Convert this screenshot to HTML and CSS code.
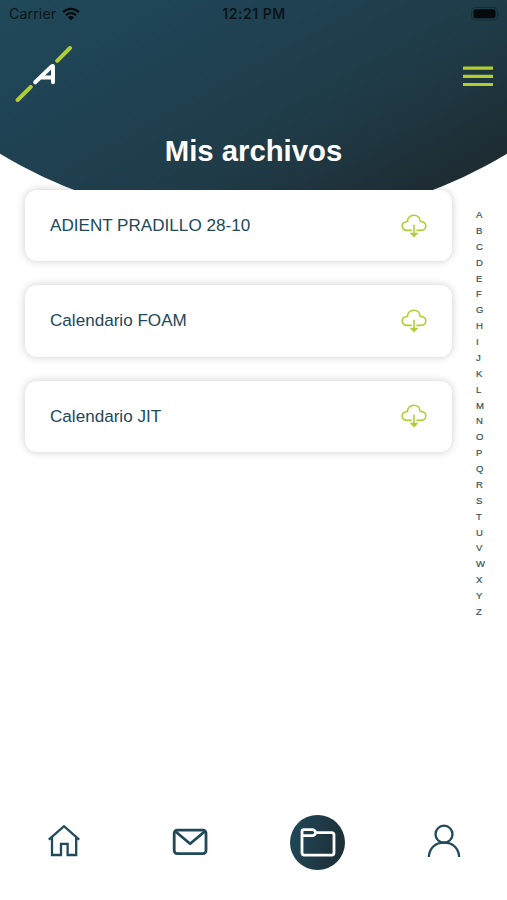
FILE: index.html
```
<!DOCTYPE html>
<html lang="es">

<head>
    <meta charset="utf-8">
    <meta name="viewport" content="width=device-width, initial-scale=1">
    <title>Mis archivos</title>
    <link rel="stylesheet" href="styles.css">
</head>

<body>

    <svg class="defs" width="0" height="0">
        <symbol id="cloud" viewBox="0 0 26 24">
            <path d="M10.8 16.4H6C3.2 16.4 1.2 14.4 1.2 11.9C1.2 9.5 3.2 7.6 6.5 7.5C6.4 3.8 9.2 1.2 12.8 1.2C16.4 1.2 19 3.6 19.2 7.3C22.8 7.6 24.8 9.4 24.8 12C24.8 14.5 22.8 16.4 20 16.4H15.4M13 10.8V21"/>
            <path class="head" d="M10.3 19.5L13 22.4L15.7 19.5Z"/>
        </symbol>
    </svg>

    <header class="header">
        <div class="status">
            <div class="carrier">
                <span>Carrier</span>
                <svg width="18" height="14" viewBox="0 0 18 14">
                    <path class="wave" d="M1.1 5.1C5.5 0.7 12.5 0.7 16.9 5.1M4 8.2C6.8 5.5 11.2 5.5 14 8.2"/>
                    <path d="M9 13.3L5.9 10.2C7.6 8.7 10.4 8.7 12.1 10.2Z"/>
                </svg>
            </div>
            <span class="time">12:21 PM</span>
            <svg class="battery" width="28" height="14" viewBox="0 0 28 14">
                <rect class="shell" x="0.5" y="0.5" width="26" height="12.5" rx="3.5"/>
                <rect x="2.5" y="2.3" width="22" height="9" rx="2"/>
                <path class="tip" d="M27 4.7C28.4 5.3 28.4 8.3 27 8.9Z"/>
            </svg>
        </div>

        <div class="top">
            <svg class="logo" width="58" height="58" viewBox="0 0 58 58">
                <path class="slash" d="M2.6 55L15.8 41.8M42.2 15.8L55 3"/>
                <path class="letter" d="M20.2 37.3L36.6 21.4Q38 20.2 38 22V37.3M26 32.6H38"/>
            </svg>
            <svg class="menu" width="30" height="21" viewBox="0 0 30 21">
                <path d="M0 2.1H30M0 10.3H30M0 18.5H30"/>
            </svg>
        </div>

        <h1>Mis archivos</h1>
    </header>

    <main>
        <ul class="files">
            <li>
                <span>ADIENT PRADILLO 28-10</span>
                <svg width="26" height="24"><use href="#cloud"/></svg>
            </li>
            <li>
                <span>Calendario FOAM</span>
                <svg width="26" height="24"><use href="#cloud"/></svg>
            </li>
            <li>
                <span>Calendario JIT</span>
                <svg width="26" height="24"><use href="#cloud"/></svg>
            </li>
        </ul>

        <ul class="index">
            <li>A</li>
            <li>B</li>
            <li>C</li>
            <li>D</li>
            <li>E</li>
            <li>F</li>
            <li>G</li>
            <li>H</li>
            <li>I</li>
            <li>J</li>
            <li>K</li>
            <li>L</li>
            <li>M</li>
            <li>N</li>
            <li>O</li>
            <li>P</li>
            <li>Q</li>
            <li>R</li>
            <li>S</li>
            <li>T</li>
            <li>U</li>
            <li>V</li>
            <li>W</li>
            <li>X</li>
            <li>Y</li>
            <li>Z</li>
        </ul>
    </main>

    <nav class="tabs">
        <a>
            <svg width="34" height="34" viewBox="0 0 34 34">
                <path class="thin" d="M1.8 15.6L17 2.2L32.2 15.6M5 13V31H14V19.8H20.6V31H29.2V13"/>
            </svg>
        </a>
        <a>
            <svg width="36" height="28" viewBox="0 0 36 28">
                <rect x="2.2" y="2.2" width="31.8" height="23.4" rx="3"/>
                <path d="M3.2 3.3L18.1 15.8L33 3.3"/>
            </svg>
        </a>
        <a class="active">
            <svg width="36" height="29" viewBox="0 0 36 29">
                <path d="M2 7.6V3.6Q2 1.6 4 1.6H12.6Q13.8 1.6 14.6 2.6L16 4.6H31.6Q34 4.6 34 7V24.8Q34 27.2 31.6 27.2H4.4Q2 27.2 2 24.8ZM2 7.6H12.6Q13.8 7.6 14.6 6.6L16 4.6"/>
            </svg>
        </a>
        <a>
            <svg width="34" height="34" viewBox="0 0 34 34">
                <circle class="thin" cx="17" cy="10.2" r="8.5"/>
                <path class="thin" d="M1.8 33C2.4 24 8.2 18.7 17 18.7C25.8 18.7 31.6 24 32.2 33"/>
            </svg>
        </a>
    </nav>

</body>

</html>
```
FILE: styles.css
```
* {
    margin: 0;
    padding: 0;
    box-sizing: border-box;
}

body {
    --lime: #b1cd31;
    --petrol: #20495a;
    display: flex;
    flex-direction: column;
    height: 900px;
    background: #fff;
    color: var(--petrol);
    font-family: "Liberation Sans", Arial, sans-serif;
    overflow: hidden;
}

ul {
    list-style: none;
}

svg {
    display: block;
    flex-shrink: 0;
    fill: none;
}

.defs {
    position: absolute;
}



.header {
    height: 190px;
    background: linear-gradient(151deg, #20495a 0%, #1f4152 38%, #1f3b47 63%, #1e2c33 91%);
    clip-path: circle(492px at 50% -268px);      /* rounded bottom */
}

.status {
    display: grid;
    grid-template-columns: 1fr auto 1fr;
    align-items: center;
    height: 27px;
    padding: 0 8px 0 9px;
    color: #0b1519;
    font-family: Inter, sans-serif;
    font-size: 14px;
}

.carrier {
    display: flex;
    gap: 6px;
    align-items: center;
    letter-spacing: 0.2px;
}

.status svg {
    fill: #050a0c;
}

.status .wave {
    fill: none;
    stroke: #050a0c;
    stroke-width: 2.2;
}

.time {
    font-weight: 600;
    letter-spacing: 0.55px;
}

.battery {
    justify-self: end;
}

.status .shell {
    fill: none;
    stroke: #172e38;
}

.status .tip {
    fill: #172e38;
}

.top {
    display: flex;
    justify-content: space-between;
    padding: 18px 14px 0 15px;
}

.menu {
    margin-top: 21px;
    stroke: var(--lime);
    stroke-width: 3.2;
}

.logo .slash {
    stroke: var(--lime);
    stroke-width: 4;
    stroke-linecap: round;
}

.logo .letter {
    stroke: #fff;
    stroke-width: 4;
    stroke-linecap: round;
    stroke-linejoin: round;
}

h1 {
    margin-top: 31px;
    color: #fff;
    font-size: 29.3px;
    line-height: 34px;
    text-align: center;
}



main {
    display: flex;
    flex: 1;
}

.files {
    display: flex;
    flex-direction: column;
    gap: 24px;
    width: 427px;
    margin-left: 25px;
}

.files li {
    display: flex;
    align-items: center;
    justify-content: space-between;
    height: 71.3px;
    padding: 0 25px;
    border-radius: 12px;
    background: #fff;
    box-shadow: 0 0 8px rgba(0,0,0,0.2);
    font-size: 17.1px;
}

.files span {
    padding-top: 1px;
}

.files svg {
    stroke: var(--lime);
    stroke-width: 1.6;
}

.head {
    fill: var(--lime);
}

.index {
    margin: 17px 0 0 24px;
    color: #34505b;
    font-size: 9.5px;
    line-height: 15.88px;
    -webkit-text-stroke: 0.2px #34505b;
}



.tabs {
    display: grid;
    grid-template-columns: repeat(4, 1fr);
    align-items: center;
    height: 56px;
    margin-bottom: 30px;
}

.tabs a {
    display: flex;
    align-items: center;
    justify-content: center;
}

.tabs a:first-child {
    padding: 0 0 2px 2px;
}

.tabs a:last-child {
    padding-bottom: 3px;
}

.tabs svg {
    stroke: var(--petrol);
    stroke-width: 2.8;
    stroke-linejoin: round;
}

.tabs .thin {
    stroke-width: 2.3;
    stroke-linejoin: miter;
}

.tabs .active {
    justify-self: center;
    width: 55px;
    height: 55px;
    margin-left: 2px;
    border-radius: 50%;
    background: linear-gradient(100deg, #20495a, #1e2c33);
}

.tabs .active svg {
    stroke: #fff;
}
```
